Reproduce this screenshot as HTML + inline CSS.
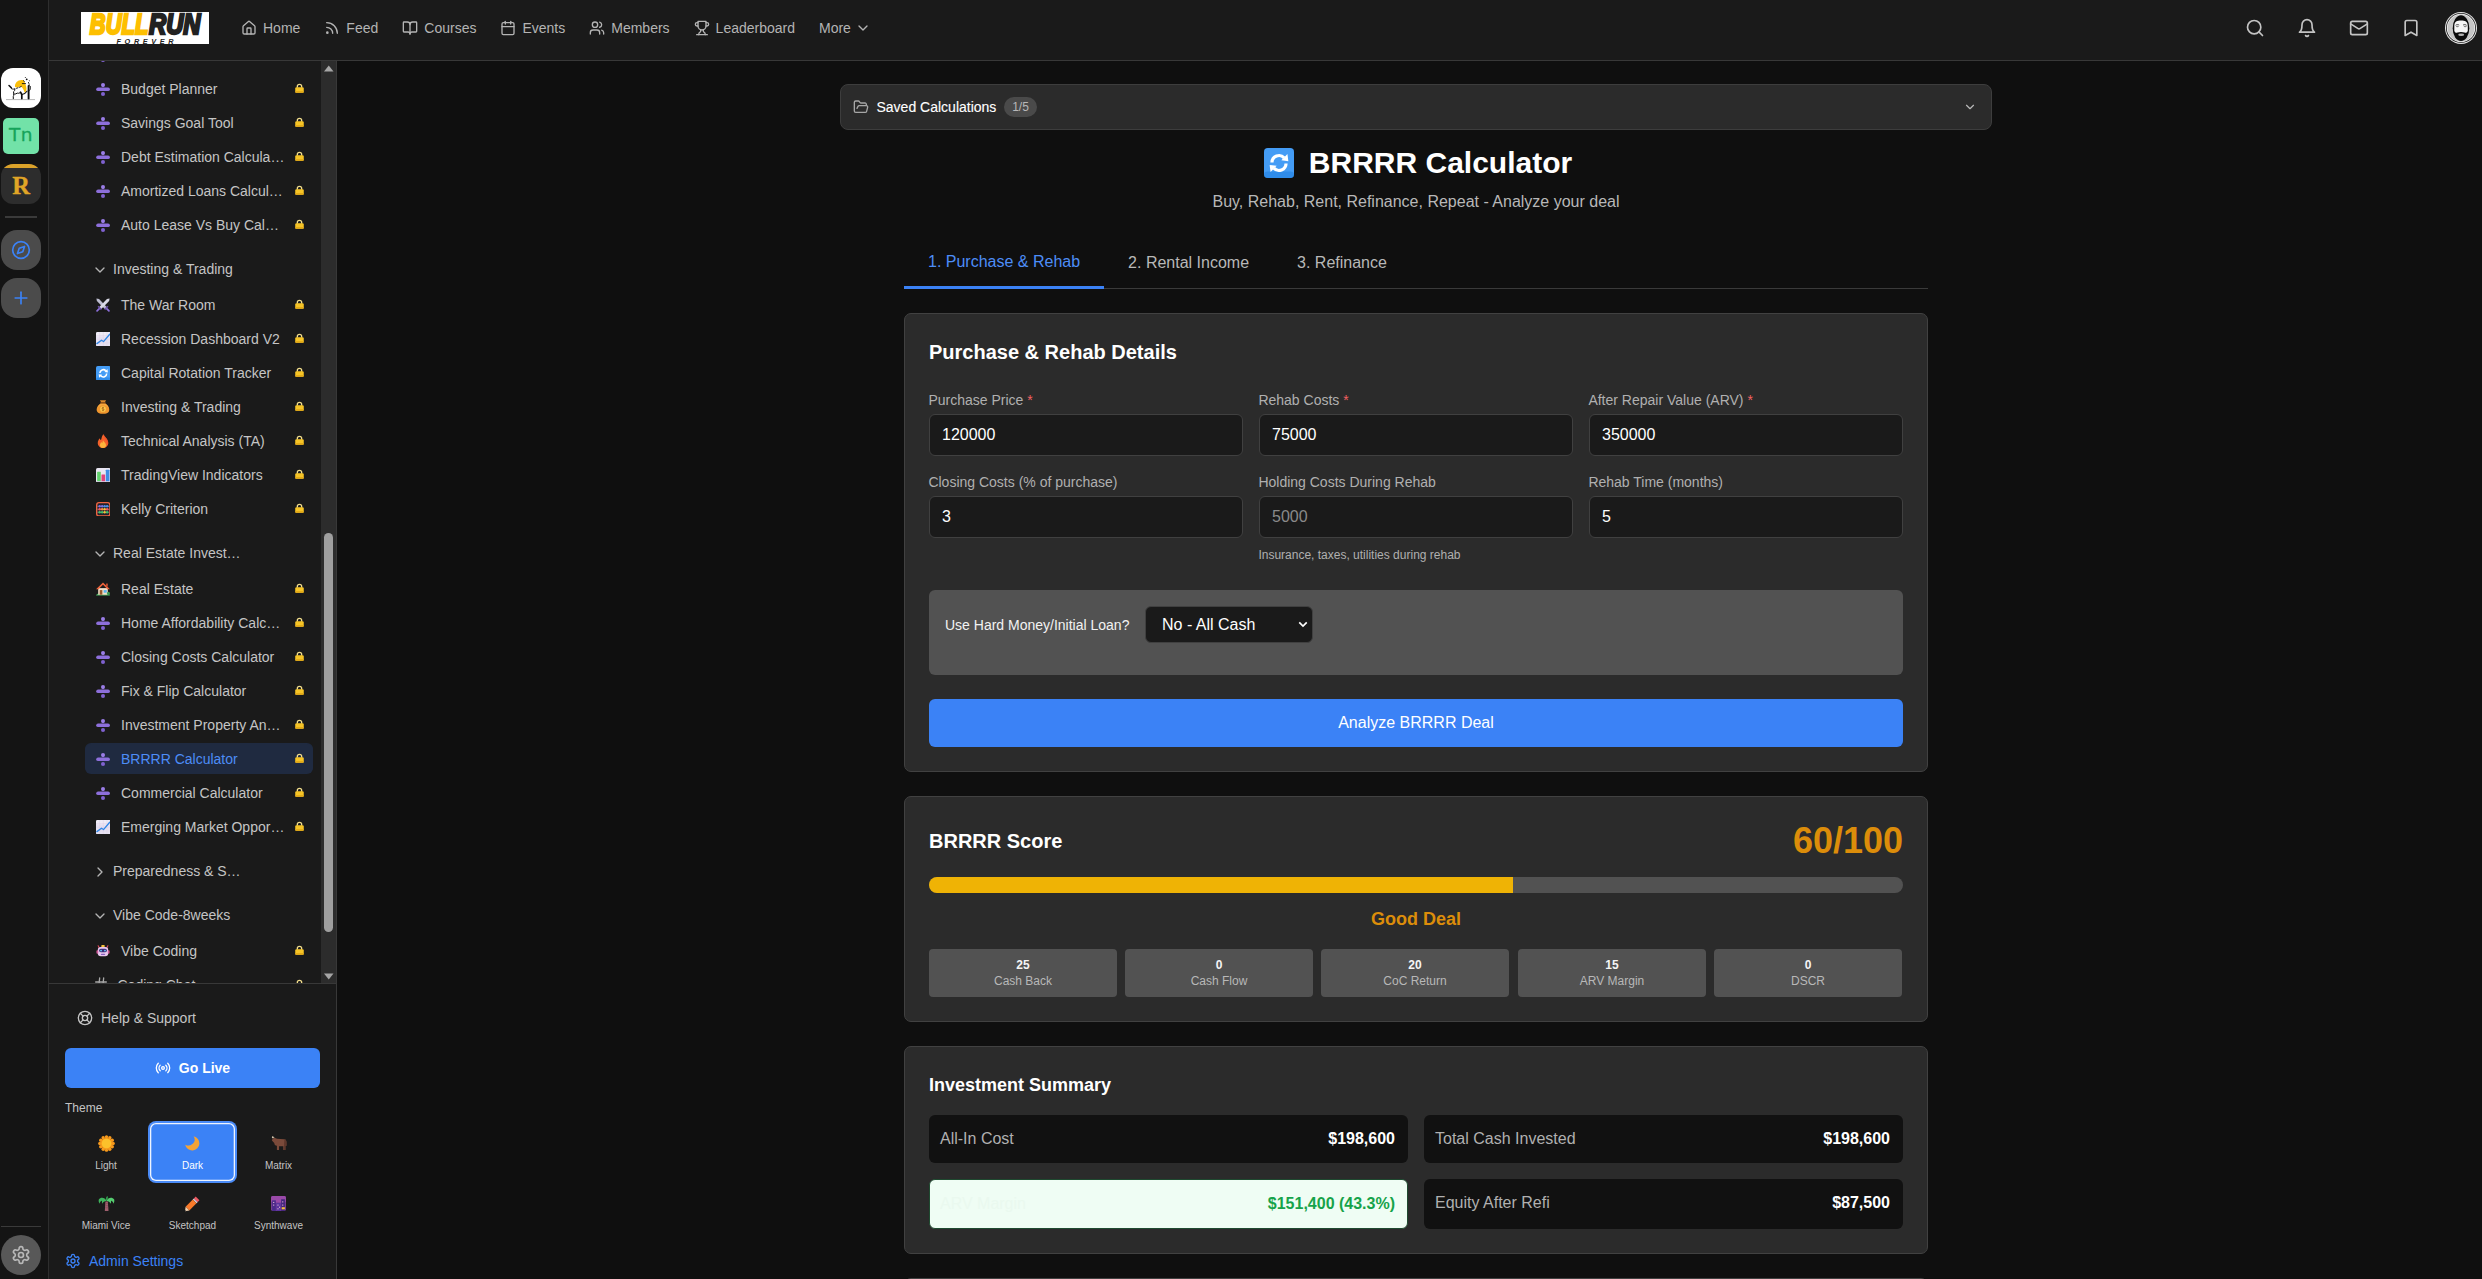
<!DOCTYPE html>
<html lang="en">
<head>
<meta charset="utf-8">
<title>BRRRR Calculator</title>
<style>
*{box-sizing:border-box;margin:0;padding:0}
html,body{width:2482px;height:1279px;overflow:hidden;background:#0f0f0f;font-family:"Liberation Sans",Arial,sans-serif;color:#e5e5e5}
svg{display:block}
.ic{fill:none;stroke:currentColor;stroke-width:2;stroke-linecap:round;stroke-linejoin:round}
/* ---------- left rail ---------- */
#rail{position:absolute;left:0;top:0;width:49px;height:1279px;background:#141414;border-right:1px solid #2e2e2e}
.rbtn{position:absolute;left:1px;width:40px;height:40px;border-radius:12px;overflow:hidden}
.rbtn svg{position:absolute;left:10px;top:10px}
/* ---------- top bar ---------- */
#top{position:absolute;left:49px;top:0;width:2433px;height:61px;background:#1a1a1a;border-bottom:1px solid #383838}
#logo{position:absolute;left:32px;top:12px;width:128px;height:32px;background:#fff;overflow:hidden}
#nav{position:absolute;left:180px;top:0;height:56px;display:flex;align-items:center;color:#b4b4b4;font-size:14px;white-space:nowrap}
.ni{display:flex;align-items:center;padding:0 12px;line-height:20px}
.ni svg{margin-right:6px}
.tic{position:absolute;top:18px;width:20px;height:20px;color:#c4c4c4}
#ava{position:absolute;left:2396px;top:12px;width:32px;height:32px}
/* ---------- sidebar ---------- */
#side{position:absolute;left:49px;top:61px;width:288px;height:1218px;background:#1a1a1a;border-right:1px solid #383838}
#scroll{position:absolute;left:0;top:0;width:287px;height:923px;overflow:hidden;border-bottom:1px solid #383838}
#sbar{position:absolute;left:272px;top:0;width:15px;height:922px;background:#2c2c2c}
#sbar i{position:absolute;left:3px;top:472px;width:9px;height:399px;border-radius:5px;background:#9f9f9f}
#sbar svg{position:absolute;left:3px;width:9.500px;height:7px}
.it{position:absolute;left:36px;width:228px;height:30px;border-radius:6px;font-size:14px;color:#c5c5c5;white-space:nowrap}
.it .tx{position:absolute;left:36px;top:6px;line-height:18px}
.it .em{position:absolute;left:11px;top:8px;width:14px;height:14px}
.it .em.sq{left:10.700px;top:7.700px;width:14.600px;height:14.600px}
.it .em.d16{left:10px;top:7px;width:16px;height:16px}
.it .lk{position:absolute;left:209.800px;top:9.100px;width:9px;height:10.300px}
.it.act{background:#1f2a40;color:#4d8df7;box-shadow:0 -1px 0 0 #1f2a40}
.hd{position:absolute;left:46px;font-size:14px;color:#c4c4c4;white-space:nowrap;line-height:18px;height:18px}
.hd svg{position:absolute;left:-3px;top:1.500px;color:#b4b4b4}
.hd span{position:absolute;left:18px;top:0}
#help{position:absolute;left:28px;top:949px;width:16px;height:16px;color:#c4c4c4}
#helpt{position:absolute;left:52px;top:948px;font-size:14px;line-height:18px;color:#c4c4c4}
#live{position:absolute;left:16px;top:987px;width:255px;height:40px;border-radius:6px;background:#3b82f6;color:#fff;font-weight:700;font-size:14px;display:flex;align-items:center;justify-content:center}
#live svg{margin-right:8px}
#thl{position:absolute;left:16px;top:1040px;font-size:12px;line-height:14px;color:#c4c4c4}
.th{position:absolute;width:85px;height:58px;border-radius:6px;color:#c4c4c4;font-size:10px;text-align:center}
.th .te{position:absolute;left:34px;top:11.500px;width:17px;height:17px}
.th span{position:absolute;left:0;right:0;top:37px;line-height:12px}
.th.sel{background:#3b82f6;color:#fff;box-shadow:inset 0 0 0 1.300px #eef4ff,0 0 0 2px #4a8bf7}
#adm{position:absolute;left:16px;top:1192px;width:16px;height:16px;color:#3b82f6}
#admt{position:absolute;left:40px;top:1191px;font-size:14px;line-height:18px;color:#3b82f6}
/* ---------- main ---------- */
#main{position:absolute;left:337px;top:61px;width:2145px;height:1218px;overflow:hidden}
#saved{position:absolute;left:503px;top:23px;width:1152px;height:46px;background:#2b2b2b;border:1px solid #3d3d3d;border-radius:8px}
#saved .f{position:absolute;left:12px;top:14px;color:#a6a6a6}
#saved .t{position:absolute;left:35.500px;top:13px;font-size:14px;line-height:18px;color:#fff;-webkit-text-stroke:.12px #fff}
#saved .b{position:absolute;left:163px;top:12px;width:33px;height:20px;border-radius:10px;background:#4a4a4a;color:#b8b8b8;font-size:12px;line-height:20px;text-align:center}
#saved .c{position:absolute;left:1122px;top:15px;color:#b8b8b8}
#ttl{position:absolute;left:567px;top:84px;width:1024px;padding-left:4px;height:36px;display:flex;justify-content:center;align-items:center;font-size:30px;font-weight:700;color:#fff;white-space:nowrap}
#ttl svg{width:30px;height:30px;margin-right:15px}
#sub{position:absolute;left:567px;top:131px;width:1024px;text-align:center;font-size:16px;line-height:20px;color:#b8b8b8}
#tabs{position:absolute;left:567px;top:176px;width:1024px;height:52px;border-bottom:1px solid #3a3a3a;display:flex;font-size:16px;color:#b8b8b8;white-space:nowrap}
#tabs div{padding:0 24px;line-height:52px;height:52px}
#tabs .a{color:#4d8df7;border-bottom:3px solid #3b82f6;line-height:49px}
.card{position:absolute;left:567px;width:1024px;background:#2b2b2b;border:1px solid #414141;border-radius:7px}
.card h2{position:absolute;left:24px;font-weight:700;color:#fff;white-space:nowrap}
.lbl{position:absolute;font-size:14px;color:#b0b0b0;line-height:18px;white-space:nowrap}
.lbl i{color:#f26161;font-style:normal}
.inp{position:absolute;width:314px;height:42px;background:#1a1a1a;border:1px solid #404040;border-radius:6px;font-size:16px;color:#fff;line-height:40px;padding-left:12px}
.inp.ph{color:#8a8a8a}
</style>
</head>
<body>
<div id="rail">
  <div class="rbtn" style="top:68px;background:#fff">
    <svg viewBox="0 0 40 40" width="40" height="40" style="left:0;top:0">
      <path d="M14 19c-.5-4 3-7.500 7.500-7 1.500.2 2 1.500 2.500 3 .8 2.500 2 4.500 1.300 7.500-.3 1.300-1 2-1.600 2.300-.8-3-2-5-4-6.500-1.800 1.200-3.800 1.500-5.700.7z" fill="#fbbf0a"/>
      <g fill="none" stroke="#0d0d0d" stroke-linecap="round" stroke-linejoin="round">
        <path d="M8 17.500l2.300 2.300" stroke-width="1.500"/>
        <path d="M10.300 20.600c1.200.8 2.500.6 3.700.3" stroke-width=".9"/>
        <path d="M15.500 20.300l1.500-.5M18.500 19.300l1.800-.9" stroke-width=".9"/>
        <path d="M13.700 21c.4 1.300-.3 2.200-1.200 2.800.3 1 .3 1.700 0 2.600.3.800.2 1.400-.2 2v2.300" stroke-width="1"/>
        <path d="M13 26.200c1.300-.2 2.500-.3 3.300-1.100.8.300 1.600.3 2.400-.2" stroke-width="1"/>
        <path d="M19.500 24.200l1.300 2.300v4.300" stroke-width="1.700"/>
        <path d="M21 26.500c1.700 0 3.700-1.500 5-3.300" stroke-width="1.100"/>
        <path d="M27.600 18v12.800" stroke-width="1.900"/>
        <path d="M29.300 18.500c.3 1.500.2 2.700-.6 3.800" stroke-width="1"/>
        <path d="M21.300 15.600h3.200" stroke-width=".9"/>
        <path d="M22.500 12.500l.9 1.200" stroke-width=".7"/>
        <path d="M27.500 14.500c.5 1 .8 2 .8 3.200" stroke-width=".8" stroke-dasharray="1.200 1"/>
      </g>
      <circle cx="25.700" cy="11.300" r=".9" fill="#0d0d0d"/><circle cx="24.300" cy="9.600" r=".5" fill="#0d0d0d"/><circle cx="28.300" cy="12.700" r=".5" fill="#0d0d0d"/><circle cx="27.400" cy="14.500" r=".45" fill="#0d0d0d"/>
      <path d="M5 31.600h29" stroke="#9a9a9a" stroke-width=".7"/>
    </svg>
  </div>
  <div class="rbtn" style="top:118px;left:3px;width:36px;height:36px;border-radius:5px;background:#72e2a8;color:#16a35a;font-family:'DejaVu Sans','Liberation Sans',sans-serif;font-size:18.500px;line-height:33px;text-align:center;letter-spacing:.6px;-webkit-text-stroke:.3px #16a35a">Tn</div>
  <div class="rbtn" style="top:164px;background:#2d2d2d;color:#e0a526;font-family:'Liberation Serif',serif;font-weight:700;font-size:24.500px;line-height:43px;-webkit-text-stroke:.3px #e0a526;text-align:center"><div style="position:absolute;left:0;top:0;width:40px;height:3.500px;background:#dba22a"></div>R</div>
  <div style="position:absolute;left:5px;top:216px;width:32px;height:2px;background:#3a3a3a"></div>
  <div class="rbtn" style="top:230px;border-radius:16px;background:#4b4b4b;color:#3b82f6"><svg class="ic" viewBox="0 0 24 24" width="20" height="20" ><circle cx="12" cy="12" r="10"/><polygon points="16.24 7.76 14.12 14.12 7.76 16.24 9.88 9.88 16.24 7.76"/></svg></div>
  <div class="rbtn" style="top:278px;border-radius:16px;background:#4b4b4b;color:#3b82f6"><svg class="ic" viewBox="0 0 24 24" width="20" height="20" ><path d="M5 12h14"/><path d="M12 5v14"/></svg></div>
  <div style="position:absolute;left:1px;top:1226px;width:40px;height:1px;background:#3a3a3a"></div>
  <div class="rbtn" style="top:1235px;border-radius:20px;background:#585858;color:#b8b8b8"><svg class="ic" viewBox="0 0 24 24" width="20" height="20" ><path d="M12.22 2h-.44a2 2 0 0 0-2 2v.18a2 2 0 0 1-1 1.73l-.43.25a2 2 0 0 1-2 0l-.15-.08a2 2 0 0 0-2.73.73l-.22.38a2 2 0 0 0 .73 2.73l.15.1a2 2 0 0 1 1 1.72v.51a2 2 0 0 1-1 1.74l-.15.09a2 2 0 0 0-.73 2.73l.22.38a2 2 0 0 0 2.73.73l.15-.08a2 2 0 0 1 2 0l.43.25a2 2 0 0 1 1 1.73V20a2 2 0 0 0 2 2h.44a2 2 0 0 0 2-2v-.18a2 2 0 0 1 1-1.73l.43-.25a2 2 0 0 1 2 0l.15.08a2 2 0 0 0 2.73-.73l.22-.39a2 2 0 0 0-.73-2.73l-.15-.08a2 2 0 0 1-1-1.74v-.5a2 2 0 0 1 1-1.74l.15-.09a2 2 0 0 0 .73-2.73l-.22-.38a2 2 0 0 0-2.73-.73l-.15.08a2 2 0 0 1-2 0l-.43-.25a2 2 0 0 1-1-1.73V4a2 2 0 0 0-2-2z"/><circle cx="12" cy="12" r="3"/></svg></div>
</div>

<div id="top">
  <div id="logo">
    <svg viewBox="0 0 128 32" width="128" height="32">
      <g font-family="Liberation Sans, sans-serif" font-weight="700" font-style="italic" stroke-linejoin="miter">
      <text x="8.800" y="22.200" font-size="29.500" fill="#fdbf00" stroke="#fdbf00" stroke-width="2.500" textLength="58.500" lengthAdjust="spacingAndGlyphs">BULL</text>
      <text x="68" y="22.200" font-size="29.500" fill="#222" stroke="#222" stroke-width="2.500" textLength="51.500" lengthAdjust="spacingAndGlyphs">RUN</text>
      <text x="35.500" y="31.800" font-size="7.300" fill="#222" textLength="57" lengthAdjust="spacing">FOREVER</text>
      </g>
    </svg>
  </div>
  <div id="nav"><div class="ni"><svg class="ic" viewBox="0 0 24 24" width="16" height="16" ><path d="M15 21v-8a1 1 0 0 0-1-1h-4a1 1 0 0 0-1 1v8"/><path d="M3 10a2 2 0 0 1 .709-1.528l7-5.999a2 2 0 0 1 2.582 0l7 5.999A2 2 0 0 1 21 10v9a2 2 0 0 1-2 2H5a2 2 0 0 1-2-2z"/></svg><span>Home</span></div><div class="ni"><svg class="ic" viewBox="0 0 24 24" width="16" height="16" ><path d="M4 11a9 9 0 0 1 9 9"/><path d="M4 4a16 16 0 0 1 16 16"/><circle cx="5" cy="19" r="1"/></svg><span>Feed</span></div><div class="ni"><svg class="ic" viewBox="0 0 24 24" width="16" height="16" ><path d="M12 7v14"/><path d="M3 18a1 1 0 0 1-1-1V4a1 1 0 0 1 1-1h5a4 4 0 0 1 4 4 4 4 0 0 1 4-4h5a1 1 0 0 1 1 1v13a1 1 0 0 1-1 1h-6a3 3 0 0 0-3 3 3 3 0 0 0-3-3z"/></svg><span>Courses</span></div><div class="ni"><svg class="ic" viewBox="0 0 24 24" width="16" height="16" ><path d="M8 2v4"/><path d="M16 2v4"/><rect width="18" height="18" x="3" y="4" rx="2"/><path d="M3 10h18"/></svg><span>Events</span></div><div class="ni"><svg class="ic" viewBox="0 0 24 24" width="16" height="16" ><path d="M16 21v-2a4 4 0 0 0-4-4H6a4 4 0 0 0-4 4v2"/><circle cx="9" cy="7" r="4"/><path d="M22 21v-2a4 4 0 0 0-3-3.87"/><path d="M16 3.13a4 4 0 0 1 0 7.75"/></svg><span>Members</span></div><div class="ni"><svg class="ic" viewBox="0 0 24 24" width="16" height="16" ><path d="M6 9H4.5a2.5 2.5 0 0 1 0-5H6"/><path d="M18 9h1.5a2.5 2.5 0 0 0 0-5H18"/><path d="M4 22h16"/><path d="M10 14.66V17c0 .55-.47.98-.97 1.21C7.85 18.75 7 20.24 7 22"/><path d="M14 14.66V17c0 .55.47.98.97 1.21C16.15 18.75 17 20.24 17 22"/><path d="M18 2H6v7a6 6 0 0 0 12 0V2Z"/></svg><span>Leaderboard</span></div><div class="ni"><span>More</span><svg class="ic" viewBox="0 0 24 24" width="16" height="16" style="margin:0 0 0 4px"><path d="m6 9 6 6 6-6"/></svg></div></div>
  <div class="tic" style="left:2196px"><svg class="ic" viewBox="0 0 24 24" width="20" height="20" ><circle cx="11" cy="11" r="8"/><path d="m21 21-4.3-4.3"/></svg></div>
  <div class="tic" style="left:2248px"><svg class="ic" viewBox="0 0 24 24" width="20" height="20" ><path d="M6 8a6 6 0 0 1 12 0c0 7 3 9 3 9H3s3-2 3-9"/><path d="M10.3 21a1.94 1.94 0 0 0 3.4 0"/></svg></div>
  <div class="tic" style="left:2300px"><svg class="ic" viewBox="0 0 24 24" width="20" height="20" ><rect width="20" height="16" x="2" y="4" rx="2"/><path d="m22 7-8.97 5.7a1.94 1.94 0 0 1-2.06 0L2 7"/></svg></div>
  <div class="tic" style="left:2352px"><svg class="ic" viewBox="0 0 24 24" width="20" height="20" ><path d="m19 21-7-4-7 4V5a2 2 0 0 1 2-2h10a2 2 0 0 1 2 2v16z"/></svg></div>
  <svg id="ava" viewBox="0 0 32 32">
    <circle cx="16" cy="16" r="16" fill="#e4e4e4"/><circle cx="16" cy="16" r="15" fill="#1c1c1c"/><circle cx="16" cy="16" r="14.200" fill="#f0f0f0"/><circle cx="16" cy="16" r="13.400" fill="#c6c6c6"/>
    <ellipse cx="16" cy="16.200" rx="8.300" ry="12.900" fill="#0b0b0b"/>
    <path d="M9.300 14.500C9.300 9.500 12 8.600 16 8.600s6.800.9 6.800 5.900v4.200c-.8 2.400-2.300 2.100-3.300 1.700-1.700-.7-5.300-.7-7 0-1 .4-2.500.7-3.200-1.700z" fill="#f6f6f6"/>
    <ellipse cx="16.200" cy="22.700" rx="3" ry="1.300" fill="#b5b5b5"/>
    <path d="M10.600 13.300c1-.9 2.600-.9 3.600-.2M18 13.100c1-.7 2.600-.7 3.600.2" stroke="#3a3a3a" stroke-width=".9" fill="none"/>
    <ellipse cx="12.400" cy="14.500" rx="1.500" ry=".8" fill="#8a8a8a"/><ellipse cx="20.200" cy="14.500" rx="1.500" ry=".8" fill="#8a8a8a"/>
  </svg>
</div>

<div id="side">
  <div id="scroll">
<div class="it" style="top:-21px"><svg class="em d16" viewBox="0 0 32 32"><rect x="2.400" y="12.800" width="27.400" height="7.400" rx="3.700" fill="#8d6fdb"/><circle cx="16" cy="8.200" r="4.100" fill="#9a7de6"/><circle cx="16" cy="26.100" r="4.100" fill="#7f61cf"/></svg><span class="tx">Net Worth Tracker</span><svg class="lk" viewBox="0 0 20 22"><path d="M5.200 10V7.300a4.800 4.800 0 0 1 9.600 0V10" fill="none" stroke="#f0dc8c" stroke-width="3"/><rect x="0.500" y="9" width="19" height="12.500" rx="3" fill="#f6c426"/><rect x="0.500" y="17.500" width="19" height="4" rx="2" fill="#e4ab18"/></svg></div>
<div class="it" style="top:13px"><svg class="em d16" viewBox="0 0 32 32"><rect x="2.400" y="12.800" width="27.400" height="7.400" rx="3.700" fill="#8d6fdb"/><circle cx="16" cy="8.200" r="4.100" fill="#9a7de6"/><circle cx="16" cy="26.100" r="4.100" fill="#7f61cf"/></svg><span class="tx">Budget Planner</span><svg class="lk" viewBox="0 0 20 22"><path d="M5.200 10V7.300a4.800 4.800 0 0 1 9.600 0V10" fill="none" stroke="#f0dc8c" stroke-width="3"/><rect x="0.500" y="9" width="19" height="12.500" rx="3" fill="#f6c426"/><rect x="0.500" y="17.500" width="19" height="4" rx="2" fill="#e4ab18"/></svg></div>
<div class="it" style="top:47px"><svg class="em d16" viewBox="0 0 32 32"><rect x="2.400" y="12.800" width="27.400" height="7.400" rx="3.700" fill="#8d6fdb"/><circle cx="16" cy="8.200" r="4.100" fill="#9a7de6"/><circle cx="16" cy="26.100" r="4.100" fill="#7f61cf"/></svg><span class="tx">Savings Goal Tool</span><svg class="lk" viewBox="0 0 20 22"><path d="M5.200 10V7.300a4.800 4.800 0 0 1 9.600 0V10" fill="none" stroke="#f0dc8c" stroke-width="3"/><rect x="0.500" y="9" width="19" height="12.500" rx="3" fill="#f6c426"/><rect x="0.500" y="17.500" width="19" height="4" rx="2" fill="#e4ab18"/></svg></div>
<div class="it" style="top:81px"><svg class="em d16" viewBox="0 0 32 32"><rect x="2.400" y="12.800" width="27.400" height="7.400" rx="3.700" fill="#8d6fdb"/><circle cx="16" cy="8.200" r="4.100" fill="#9a7de6"/><circle cx="16" cy="26.100" r="4.100" fill="#7f61cf"/></svg><span class="tx">Debt Estimation Calcula…</span><svg class="lk" viewBox="0 0 20 22"><path d="M5.200 10V7.300a4.800 4.800 0 0 1 9.600 0V10" fill="none" stroke="#f0dc8c" stroke-width="3"/><rect x="0.500" y="9" width="19" height="12.500" rx="3" fill="#f6c426"/><rect x="0.500" y="17.500" width="19" height="4" rx="2" fill="#e4ab18"/></svg></div>
<div class="it" style="top:115px"><svg class="em d16" viewBox="0 0 32 32"><rect x="2.400" y="12.800" width="27.400" height="7.400" rx="3.700" fill="#8d6fdb"/><circle cx="16" cy="8.200" r="4.100" fill="#9a7de6"/><circle cx="16" cy="26.100" r="4.100" fill="#7f61cf"/></svg><span class="tx">Amortized Loans Calcul…</span><svg class="lk" viewBox="0 0 20 22"><path d="M5.200 10V7.300a4.800 4.800 0 0 1 9.600 0V10" fill="none" stroke="#f0dc8c" stroke-width="3"/><rect x="0.500" y="9" width="19" height="12.500" rx="3" fill="#f6c426"/><rect x="0.500" y="17.500" width="19" height="4" rx="2" fill="#e4ab18"/></svg></div>
<div class="it" style="top:149px"><svg class="em d16" viewBox="0 0 32 32"><rect x="2.400" y="12.800" width="27.400" height="7.400" rx="3.700" fill="#8d6fdb"/><circle cx="16" cy="8.200" r="4.100" fill="#9a7de6"/><circle cx="16" cy="26.100" r="4.100" fill="#7f61cf"/></svg><span class="tx">Auto Lease Vs Buy Cal…</span><svg class="lk" viewBox="0 0 20 22"><path d="M5.200 10V7.300a4.800 4.800 0 0 1 9.600 0V10" fill="none" stroke="#f0dc8c" stroke-width="3"/><rect x="0.500" y="9" width="19" height="12.500" rx="3" fill="#f6c426"/><rect x="0.500" y="17.500" width="19" height="4" rx="2" fill="#e4ab18"/></svg></div>
<div class="hd" style="top:199px"><svg class="ic" viewBox="0 0 24 24" width="16" height="16" ><path d="m6 9 6 6 6-6"/></svg><span>Investing &amp; Trading</span></div>
<div class="it" style="top:229px"><svg class="em" viewBox="0 0 32 32"><path d="M1 1l6 1 18 19-4.500 4.500L2 7z" fill="#bdbdd0"/><path d="M31 1l-6 1L7 21l4.500 4.500L30 7z" fill="#d9d9e6"/><path d="M18.500 25l7.500-7.500 2.500 2.500-7.500 7.500z" fill="#6f55ad"/><path d="M13.500 25L6 17.500 3.500 20l7.500 7.500z" fill="#6f55ad"/><path d="M25 25l4.500 4.500" stroke="#8d6fdb" stroke-width="4" stroke-linecap="round"/><path d="M7 25l-4.500 4.500" stroke="#8d6fdb" stroke-width="4" stroke-linecap="round"/></svg><span class="tx">The War Room</span><svg class="lk" viewBox="0 0 20 22"><path d="M5.200 10V7.300a4.800 4.800 0 0 1 9.600 0V10" fill="none" stroke="#f0dc8c" stroke-width="3"/><rect x="0.500" y="9" width="19" height="12.500" rx="3" fill="#f6c426"/><rect x="0.500" y="17.500" width="19" height="4" rx="2" fill="#e4ab18"/></svg></div>
<div class="it" style="top:263px"><svg class="em sq" viewBox="0 0 32 32"><rect x="0" y="0" width="32" height="32" rx="3.500" fill="#e6e1f1"/><rect x="0" y="0" width="32" height="10" rx="3.500" fill="#efecf6"/><path d="M0 8h32M0 16h32M0 24h32M8 0v32M16 0v32M24 0v32" stroke="#dccfe6" stroke-width="1"/><path d="M2 25.500l10-7.500 4.500 3L30 5" fill="none" stroke="#2f86e6" stroke-width="2.800" stroke-linecap="round" stroke-linejoin="round"/></svg><span class="tx">Recession Dashboard V2</span><svg class="lk" viewBox="0 0 20 22"><path d="M5.200 10V7.300a4.800 4.800 0 0 1 9.600 0V10" fill="none" stroke="#f0dc8c" stroke-width="3"/><rect x="0.500" y="9" width="19" height="12.500" rx="3" fill="#f6c426"/><rect x="0.500" y="17.500" width="19" height="4" rx="2" fill="#e4ab18"/></svg></div>
<div class="it" style="top:297px"><svg class="em sq" viewBox="0 0 32 32"><rect x="0" y="0" width="32" height="32" rx="4" fill="#449cf5"/><rect x="0" y="25" width="32" height="7" rx="4" fill="#1f7fe0" opacity=".55"/><path d="M8.500 15.500a7.500 7.500 0 0 1 13-5" fill="none" stroke="#fff" stroke-width="3.400"/><path d="M18.500 13l7.500 1-1-7.500z" fill="#fff"/><path d="M23.500 16.500a7.500 7.500 0 0 1-13 5" fill="none" stroke="#fff" stroke-width="3.400"/><path d="M13.500 19L6 18l1 7.500z" fill="#fff"/></svg><span class="tx">Capital Rotation Tracker</span><svg class="lk" viewBox="0 0 20 22"><path d="M5.200 10V7.300a4.800 4.800 0 0 1 9.600 0V10" fill="none" stroke="#f0dc8c" stroke-width="3"/><rect x="0.500" y="9" width="19" height="12.500" rx="3" fill="#f6c426"/><rect x="0.500" y="17.500" width="19" height="4" rx="2" fill="#e4ab18"/></svg></div>
<div class="it" style="top:331px"><svg class="em" viewBox="0 0 32 32"><path d="M11.500 4.500L9 .8h14l-2.500 3.700z" fill="#d9892c"/><path d="M10.500 5h11l.8 3.500h-12.600z" fill="#b5651a"/><path d="M10 8.500C3 13 0 20.500 2.500 26c1.700 4 6 5.500 13.500 5.500S27.800 30 29.500 26C32 20.500 29 13 22 8.500z" fill="#ef962e"/><path d="M10 8.500C6 11 3.500 15 2.500 19c3-4 8-7 13.500-7s10.500 3 13.500 7c-1-4-3.500-8-7.500-10.500z" fill="#f9ae45" opacity=".7"/><circle cx="16" cy="20.500" r="6.500" fill="#f9cc4e"/><path d="M16 15.500v10M18.500 18c-1.300-1.300-5-1.100-5 .9 0 2.200 5.200 1.100 5.200 3.400 0 2-3.900 2.200-5.400.7" fill="none" stroke="#a65b16" stroke-width="1.600"/></svg><span class="tx">Investing &amp; Trading</span><svg class="lk" viewBox="0 0 20 22"><path d="M5.200 10V7.300a4.800 4.800 0 0 1 9.600 0V10" fill="none" stroke="#f0dc8c" stroke-width="3"/><rect x="0.500" y="9" width="19" height="12.500" rx="3" fill="#f6c426"/><rect x="0.500" y="17.500" width="19" height="4" rx="2" fill="#e4ab18"/></svg></div>
<div class="it" style="top:365px"><svg class="em" viewBox="0 0 32 32"><path d="M17 0c1 6 11 10 11 20.500C28 27 22.500 32 16 32S4 27 4 20.500c0-5 2.500-7.500 4-11 1 2.500 2 3.500 3.500 4C13 9 13.500 4 17 0z" fill="#f4622a"/><path d="M17 0c1 6 11 10 11 20.500 0 2-.5 4-1.500 5.500C27 17 19 12 17 0z" fill="#e8452a" opacity=".55"/><path d="M16 14c1.500 4 7 6 7 11.500C23 29 20 32 16 32s-7-3-7-6.500c0-3 2-4.500 3-7 1 1.500 2 2 2.500 2 .5-2.500.5-4 1.500-6.500z" fill="#fcb43b"/></svg><span class="tx">Technical Analysis (TA)</span><svg class="lk" viewBox="0 0 20 22"><path d="M5.200 10V7.300a4.800 4.800 0 0 1 9.600 0V10" fill="none" stroke="#f0dc8c" stroke-width="3"/><rect x="0.500" y="9" width="19" height="12.500" rx="3" fill="#f6c426"/><rect x="0.500" y="17.500" width="19" height="4" rx="2" fill="#e4ab18"/></svg></div>
<div class="it" style="top:399px"><svg class="em sq" viewBox="0 0 32 32"><rect x="0" y="0" width="32" height="32" rx="3.500" fill="#eae6f2"/><rect x="2.500" y="8" width="8" height="22" rx="1" fill="#62d26c"/><rect x="12" y="14" width="8" height="16" rx="1" fill="#e0457b"/><rect x="21.500" y="4" width="8" height="26" rx="1" fill="#3d8ee6"/><rect x="0" y="29" width="32" height="3" rx="1.500" fill="#d3cbe3"/></svg><span class="tx">TradingView Indicators</span><svg class="lk" viewBox="0 0 20 22"><path d="M5.200 10V7.300a4.800 4.800 0 0 1 9.600 0V10" fill="none" stroke="#f0dc8c" stroke-width="3"/><rect x="0.500" y="9" width="19" height="12.500" rx="3" fill="#f6c426"/><rect x="0.500" y="17.500" width="19" height="4" rx="2" fill="#e4ab18"/></svg></div>
<div class="it" style="top:433px"><svg class="em sq" viewBox="0 0 32 32"><rect x="1.500" y="1.500" width="29" height="29" rx="5" fill="#22202c" stroke="#ee6440" stroke-width="3"/><path d="M3 9.500h26M3 16h26M3 22.500h26" stroke="#b9b9c4" stroke-width="1"/><g><circle cx="8" cy="9.500" r="2.700" fill="#7a6fe0"/><circle cx="13.500" cy="9.500" r="2.700" fill="#7a6fe0"/><circle cx="19" cy="9.500" r="2.700" fill="#4a8fe8"/><circle cx="24.500" cy="9.500" r="2.700" fill="#4a8fe8"/><circle cx="8" cy="16" r="2.700" fill="#ef5a63"/><circle cx="13.500" cy="16" r="2.700" fill="#f6913a"/><circle cx="19" cy="16" r="2.700" fill="#f6c13a"/><circle cx="24.500" cy="16" r="2.700" fill="#ef5a63"/><circle cx="8" cy="22.500" r="2.700" fill="#3fbf6b"/><circle cx="13.500" cy="22.500" r="2.700" fill="#3fbf6b"/><circle cx="19" cy="22.500" r="2.700" fill="#f6c13a"/><circle cx="24.500" cy="22.500" r="2.700" fill="#3fbf6b"/></g></svg><span class="tx">Kelly Criterion</span><svg class="lk" viewBox="0 0 20 22"><path d="M5.200 10V7.300a4.800 4.800 0 0 1 9.600 0V10" fill="none" stroke="#f0dc8c" stroke-width="3"/><rect x="0.500" y="9" width="19" height="12.500" rx="3" fill="#f6c426"/><rect x="0.500" y="17.500" width="19" height="4" rx="2" fill="#e4ab18"/></svg></div>
<div class="hd" style="top:483px"><svg class="ic" viewBox="0 0 24 24" width="16" height="16" ><path d="m6 9 6 6 6-6"/></svg><span>Real Estate Invest…</span></div>
<div class="it" style="top:513px"><svg class="em" viewBox="0 0 32 32"><path d="M0 31c1-3 4-4.500 7-4h18c3-.500 6 1 7 4z" fill="#4cb765"/><rect x="5" y="14" width="22" height="15" fill="#f3dfc8"/><path d="M16 1L0 16.500h5.500L16 6.500l10.500 10H32z" fill="#f0643c"/><rect x="23" y="3.500" width="4" height="7" fill="#c94a2c"/><rect x="8.500" y="18.500" width="6" height="10.500" fill="#9a5a2c"/><rect x="17.500" y="18.500" width="7" height="6" fill="#59b5ef"/><circle cx="28.500" cy="26" r="3.500" fill="#3a9a52"/></svg><span class="tx">Real Estate</span><svg class="lk" viewBox="0 0 20 22"><path d="M5.200 10V7.300a4.800 4.800 0 0 1 9.600 0V10" fill="none" stroke="#f0dc8c" stroke-width="3"/><rect x="0.500" y="9" width="19" height="12.500" rx="3" fill="#f6c426"/><rect x="0.500" y="17.500" width="19" height="4" rx="2" fill="#e4ab18"/></svg></div>
<div class="it" style="top:547px"><svg class="em d16" viewBox="0 0 32 32"><rect x="2.400" y="12.800" width="27.400" height="7.400" rx="3.700" fill="#8d6fdb"/><circle cx="16" cy="8.200" r="4.100" fill="#9a7de6"/><circle cx="16" cy="26.100" r="4.100" fill="#7f61cf"/></svg><span class="tx">Home Affordability Calc…</span><svg class="lk" viewBox="0 0 20 22"><path d="M5.200 10V7.300a4.800 4.800 0 0 1 9.600 0V10" fill="none" stroke="#f0dc8c" stroke-width="3"/><rect x="0.500" y="9" width="19" height="12.500" rx="3" fill="#f6c426"/><rect x="0.500" y="17.500" width="19" height="4" rx="2" fill="#e4ab18"/></svg></div>
<div class="it" style="top:581px"><svg class="em d16" viewBox="0 0 32 32"><rect x="2.400" y="12.800" width="27.400" height="7.400" rx="3.700" fill="#8d6fdb"/><circle cx="16" cy="8.200" r="4.100" fill="#9a7de6"/><circle cx="16" cy="26.100" r="4.100" fill="#7f61cf"/></svg><span class="tx">Closing Costs Calculator</span><svg class="lk" viewBox="0 0 20 22"><path d="M5.200 10V7.300a4.800 4.800 0 0 1 9.600 0V10" fill="none" stroke="#f0dc8c" stroke-width="3"/><rect x="0.500" y="9" width="19" height="12.500" rx="3" fill="#f6c426"/><rect x="0.500" y="17.500" width="19" height="4" rx="2" fill="#e4ab18"/></svg></div>
<div class="it" style="top:615px"><svg class="em d16" viewBox="0 0 32 32"><rect x="2.400" y="12.800" width="27.400" height="7.400" rx="3.700" fill="#8d6fdb"/><circle cx="16" cy="8.200" r="4.100" fill="#9a7de6"/><circle cx="16" cy="26.100" r="4.100" fill="#7f61cf"/></svg><span class="tx">Fix &amp; Flip Calculator</span><svg class="lk" viewBox="0 0 20 22"><path d="M5.200 10V7.300a4.800 4.800 0 0 1 9.600 0V10" fill="none" stroke="#f0dc8c" stroke-width="3"/><rect x="0.500" y="9" width="19" height="12.500" rx="3" fill="#f6c426"/><rect x="0.500" y="17.500" width="19" height="4" rx="2" fill="#e4ab18"/></svg></div>
<div class="it" style="top:649px"><svg class="em d16" viewBox="0 0 32 32"><rect x="2.400" y="12.800" width="27.400" height="7.400" rx="3.700" fill="#8d6fdb"/><circle cx="16" cy="8.200" r="4.100" fill="#9a7de6"/><circle cx="16" cy="26.100" r="4.100" fill="#7f61cf"/></svg><span class="tx">Investment Property An…</span><svg class="lk" viewBox="0 0 20 22"><path d="M5.200 10V7.300a4.800 4.800 0 0 1 9.600 0V10" fill="none" stroke="#f0dc8c" stroke-width="3"/><rect x="0.500" y="9" width="19" height="12.500" rx="3" fill="#f6c426"/><rect x="0.500" y="17.500" width="19" height="4" rx="2" fill="#e4ab18"/></svg></div>
<div class="it act" style="top:683px"><svg class="em d16" viewBox="0 0 32 32"><rect x="2.400" y="12.800" width="27.400" height="7.400" rx="3.700" fill="#8d6fdb"/><circle cx="16" cy="8.200" r="4.100" fill="#9a7de6"/><circle cx="16" cy="26.100" r="4.100" fill="#7f61cf"/></svg><span class="tx">BRRRR Calculator</span><svg class="lk" viewBox="0 0 20 22"><path d="M5.200 10V7.300a4.800 4.800 0 0 1 9.600 0V10" fill="none" stroke="#f0dc8c" stroke-width="3"/><rect x="0.500" y="9" width="19" height="12.500" rx="3" fill="#f6c426"/><rect x="0.500" y="17.500" width="19" height="4" rx="2" fill="#e4ab18"/></svg></div>
<div class="it" style="top:717px"><svg class="em d16" viewBox="0 0 32 32"><rect x="2.400" y="12.800" width="27.400" height="7.400" rx="3.700" fill="#8d6fdb"/><circle cx="16" cy="8.200" r="4.100" fill="#9a7de6"/><circle cx="16" cy="26.100" r="4.100" fill="#7f61cf"/></svg><span class="tx">Commercial Calculator</span><svg class="lk" viewBox="0 0 20 22"><path d="M5.200 10V7.300a4.800 4.800 0 0 1 9.600 0V10" fill="none" stroke="#f0dc8c" stroke-width="3"/><rect x="0.500" y="9" width="19" height="12.500" rx="3" fill="#f6c426"/><rect x="0.500" y="17.500" width="19" height="4" rx="2" fill="#e4ab18"/></svg></div>
<div class="it" style="top:751px"><svg class="em sq" viewBox="0 0 32 32"><rect x="0" y="0" width="32" height="32" rx="3.500" fill="#e6e1f1"/><rect x="0" y="0" width="32" height="10" rx="3.500" fill="#efecf6"/><path d="M0 8h32M0 16h32M0 24h32M8 0v32M16 0v32M24 0v32" stroke="#dccfe6" stroke-width="1"/><path d="M2 25.500l10-7.500 4.500 3L30 5" fill="none" stroke="#2f86e6" stroke-width="2.800" stroke-linecap="round" stroke-linejoin="round"/></svg><span class="tx">Emerging Market Oppor…</span><svg class="lk" viewBox="0 0 20 22"><path d="M5.200 10V7.300a4.800 4.800 0 0 1 9.600 0V10" fill="none" stroke="#f0dc8c" stroke-width="3"/><rect x="0.500" y="9" width="19" height="12.500" rx="3" fill="#f6c426"/><rect x="0.500" y="17.500" width="19" height="4" rx="2" fill="#e4ab18"/></svg></div>
<div class="hd" style="top:801px"><svg class="ic" viewBox="0 0 24 24" width="16" height="16" ><path d="m9 18 6-6-6-6"/></svg><span>Preparedness &amp; S…</span></div>
<div class="hd" style="top:845px"><svg class="ic" viewBox="0 0 24 24" width="16" height="16" ><path d="m6 9 6 6 6-6"/></svg><span>Vibe Code-8weeks</span></div>
<div class="it" style="top:875px"><svg class="em" viewBox="0 0 32 32"><path d="M5 4l3 6M27 4l-3 6" stroke="#e24a5a" stroke-width="2.500" stroke-linecap="round"/><rect x="12" y="2" width="8" height="5" rx="2" fill="#f6c13a"/><rect x="4" y="7" width="24" height="21" rx="7" fill="#e9c8ee"/><rect x="7" y="11" width="18" height="8" rx="4" fill="#3a2a78"/><circle cx="11.500" cy="15" r="2" fill="#6fd0ff"/><circle cx="20.500" cy="15" r="2" fill="#6fd0ff"/><rect x="11" y="22" width="10" height="3" rx="1.500" fill="#8a5fbf"/><rect x="1" y="14" width="4" height="8" rx="2" fill="#d35a9a"/><rect x="27" y="14" width="4" height="8" rx="2" fill="#d35a9a"/></svg><span class="tx">Vibe Coding</span><svg class="lk" viewBox="0 0 20 22"><path d="M5.200 10V7.300a4.800 4.800 0 0 1 9.600 0V10" fill="none" stroke="#f0dc8c" stroke-width="3"/><rect x="0.500" y="9" width="19" height="12.500" rx="3" fill="#f6c426"/><rect x="0.500" y="17.500" width="19" height="4" rx="2" fill="#e4ab18"/></svg></div>
<div class="it" style="top:909px"><svg class="em ic" viewBox="0 0 24 24" style="color:#a8a8a8;left:8px;top:6px;width:16px;height:16px"><path d="M4 9h16"/><path d="M4 15h16"/><path d="M10 3 8 21"/><path d="M16 3l-2 18"/></svg><span class="tx" style="left:32.500px">Coding Chat</span><svg class="lk" viewBox="0 0 20 22"><path d="M5.200 10V7.300a4.800 4.800 0 0 1 9.600 0V10" fill="none" stroke="#f0dc8c" stroke-width="3"/><rect x="0.500" y="9" width="19" height="12.500" rx="3" fill="#f6c426"/><rect x="0.500" y="17.500" width="19" height="4" rx="2" fill="#e4ab18"/></svg></div>
    <div id="sbar"><svg viewBox="0 0 11 7" style="top:4px"><path d="M0 7L5.500 0 11 7z" fill="#a6a6a6"/></svg><i></i><svg viewBox="0 0 11 7" style="top:911.500px"><path d="M0 0L5.500 7 11 0z" fill="#a6a6a6"/></svg></div>
  </div>
  <div id="help"><svg class="ic" viewBox="0 0 24 24" width="16" height="16" ><circle cx="12" cy="12" r="10"/><path d="m4.93 4.93 4.24 4.24"/><path d="m14.83 9.17 4.24-4.24"/><path d="m14.83 14.83 4.24 4.24"/><path d="m9.17 14.83-4.24 4.24"/><circle cx="12" cy="12" r="4"/></svg></div><div id="helpt">Help &amp; Support</div>
  <div id="live"><svg class="ic" viewBox="0 0 24 24" width="16" height="16" ><path d="M4.9 19.1C1 15.2 1 8.8 4.9 4.9"/><path d="M7.8 16.2c-2.3-2.3-2.3-6.1 0-8.5"/><circle cx="12" cy="12" r="2"/><path d="M16.2 7.8c2.3 2.3 2.3 6.1 0 8.5"/><path d="M19.1 4.9C23 8.8 23 15.1 19.1 19"/></svg><span>Go Live</span></div>
  <div id="thl">Theme</div>
  <div class="th" style="left:14.5px;top:1062.0px"><svg class="te" viewBox="0 0 32 32"><g fill="#f89a1c"><circle cx="16" cy="16" r="11"/><circle cx="28.50" cy="16.00" r="3.2"/><circle cx="26.83" cy="22.25" r="3.2"/><circle cx="22.25" cy="26.83" r="3.2"/><circle cx="16.00" cy="28.50" r="3.2"/><circle cx="9.75" cy="26.83" r="3.2"/><circle cx="5.17" cy="22.25" r="3.2"/><circle cx="3.50" cy="16.00" r="3.2"/><circle cx="5.17" cy="9.75" r="3.2"/><circle cx="9.75" cy="5.17" r="3.2"/><circle cx="16.00" cy="3.50" r="3.2"/><circle cx="22.25" cy="5.17" r="3.2"/><circle cx="26.83" cy="9.75" r="3.2"/></g><circle cx="16" cy="16" r="9" fill="#fcc12b"/></svg><span>Light</span></div><div class="th sel" style="left:101.0px;top:1062.0px"><svg class="te" viewBox="0 0 32 32"><path d="M18.160 2.270A13.500 13.500 0 1 1 2.270 18.160 11.500 11.500 0 0 0 18.160 2.270z" fill="#f5a335"/><path d="M19.500 5.500A11.500 11.500 0 0 1 5.500 19.500c4.500 1.500 9 0 11.500-3.500 2.500-3.300 3.300-7 2.500-10.500z" fill="#fcc65e"/></svg><span>Dark</span></div><div class="th" style="left:187.0px;top:1062.0px"><svg class="te" viewBox="0 0 32 32"><path d="M4 6c-1-2 0-4 2-4 0 2 1 3 3 3.500z" fill="#d9c9b0"/><path d="M5 8c0-3 6-3 8-1l14 1c3 0 4 3 4 6v6h-2v8h-4v-7h-8v7h-4v-8c-3 0-5-2-5-5l-4-4c-1-2 0-3 1-3z" fill="#7a4a3a"/><path d="M27 8c3 0 4 3 4 6v6h-2v8h-3z" fill="#5e372b"/></svg><span>Matrix</span></div><div class="th" style="left:14.5px;top:1122.0px"><svg class="te" viewBox="0 0 32 32"><path d="M14 12h4.500l1.300 18h-7z" fill="#a05f6e"/><path d="M14 16h4.700M13.700 20h5.200M13.400 24h5.800" stroke="#84485a" stroke-width="1.200"/><path d="M16 11C13 4 5 3 1.500 8.500c-.8 3 .2 6 1.500 8 .5-3 2-5 4.500-5.500-.5 2 0 4 1 5.500C9.500 13.500 12 12 16 11z" fill="#3fb55d"/><path d="M16 11c3-7 11-8 14.500-2.500.8 3-.2 6-1.500 8-.5-3-2-5-4.500-5.500.500 2 0 4-1 5.500C22.500 13.500 20 12 16 11z" fill="#55cc70"/><path d="M16 11.500c-2.500-4-1-8 2-9.500 1.500 3 .5 6.500-2 9.500z" fill="#2f9a4c"/></svg><span>Miami Vice</span></div><div class="th" style="left:101.0px;top:1122.0px"><svg class="te" viewBox="0 0 32 32"><path d="M22 3l7 7-3.500 3.500-7-7z" fill="#ef5a63"/><path d="M18.500 6.500l7 7-2 2-7-7z" fill="#d9d4e3"/><path d="M16.500 8.500l7 7L10 29l-7-7z" fill="#f97a2a"/><path d="M3 22l7 7-8 1.500z" fill="#f3d3b0"/><path d="M2.300 28l2 2-2.500.500z" fill="#3a3a3a"/></svg><span>Sketchpad</span></div><div class="th" style="left:187.0px;top:1122.0px"><svg class="te" viewBox="0 0 32 32"><rect x="2" y="2" width="28" height="28" rx="3" fill="#7a3f9a"/><rect x="2" y="2" width="28" height="12" rx="3" fill="#9a4aa8"/><rect x="4" y="10" width="7" height="20" fill="#4a2a8a"/><rect x="12" y="15" width="8" height="15" fill="#5a34a0"/><rect x="21" y="8" width="7" height="22" fill="#43277c"/><g fill="#f4c0d8"><rect x="6" y="13" width="2" height="2"/><rect x="6" y="18" width="2" height="2"/><rect x="14" y="18" width="2" height="2"/><rect x="17" y="22" width="2" height="2"/><rect x="23" y="12" width="2" height="2"/><rect x="23" y="18" width="2" height="2"/><rect x="14" y="25" width="2" height="2"/></g><rect x="22" y="23" width="6" height="4" fill="#f6c13a"/></svg><span>Synthwave</span></div>
  <div id="adm"><svg class="ic" viewBox="0 0 24 24" width="16" height="16" ><path d="M12.22 2h-.44a2 2 0 0 0-2 2v.18a2 2 0 0 1-1 1.73l-.43.25a2 2 0 0 1-2 0l-.15-.08a2 2 0 0 0-2.73.73l-.22.38a2 2 0 0 0 .73 2.73l.15.1a2 2 0 0 1 1 1.72v.51a2 2 0 0 1-1 1.74l-.15.09a2 2 0 0 0-.73 2.73l.22.38a2 2 0 0 0 2.73.73l.15-.08a2 2 0 0 1 2 0l.43.25a2 2 0 0 1 1 1.73V20a2 2 0 0 0 2 2h.44a2 2 0 0 0 2-2v-.18a2 2 0 0 1 1-1.73l.43-.25a2 2 0 0 1 2 0l.15.08a2 2 0 0 0 2.73-.73l.22-.39a2 2 0 0 0-.73-2.73l-.15-.08a2 2 0 0 1-1-1.74v-.5a2 2 0 0 1 1-1.74l.15-.09a2 2 0 0 0 .73-2.73l-.22-.38a2 2 0 0 0-2.73-.73l-.15.08a2 2 0 0 1-2 0l-.43-.25a2 2 0 0 1-1-1.73V4a2 2 0 0 0-2-2z"/><circle cx="12" cy="12" r="3"/></svg></div><div id="admt">Admin Settings</div>
</div>

<div id="main">
  <div id="saved"><div class="f"><svg class="ic" viewBox="0 0 24 24" width="16" height="16" ><path d="m6 14 1.5-2.9A2 2 0 0 1 9.24 10H20a2 2 0 0 1 1.94 2.5l-1.54 6a2 2 0 0 1-1.95 1.5H4a2 2 0 0 1-2-2V5a2 2 0 0 1 2-2h3.9a2 2 0 0 1 1.69.9l.81 1.2a2 2 0 0 0 1.67.9H18a2 2 0 0 1 2 2v2"/></svg></div><div class="t">Saved Calculations</div><div class="b">1/5</div><div class="c"><svg class="ic" viewBox="0 0 24 24" width="14" height="14" ><path d="m6 9 6 6 6-6"/></svg></div></div>
  <div id="ttl"><svg viewBox="0 0 32 32"><rect x="0" y="0" width="32" height="32" rx="4" fill="#449cf5"/><rect x="0" y="25" width="32" height="7" rx="4" fill="#1f7fe0" opacity=".55"/><path d="M8.500 15.500a7.500 7.500 0 0 1 13-5" fill="none" stroke="#fff" stroke-width="3.400"/><path d="M18.500 13l7.500 1-1-7.500z" fill="#fff"/><path d="M23.500 16.500a7.500 7.500 0 0 1-13 5" fill="none" stroke="#fff" stroke-width="3.400"/><path d="M13.500 19L6 18l1 7.500z" fill="#fff"/></svg><span>BRRRR Calculator</span></div>
  <div id="sub">Buy, Rehab, Rent, Refinance, Repeat - Analyze your deal</div>
  <div id="tabs"><div class="a">1. Purchase &amp; Rehab</div><div>2. Rental Income</div><div>3. Refinance</div></div>

  <!-- card 1 -->
  <div class="card" style="top:252px;height:459px">
    <h2 style="top:26px;font-size:20px;line-height:24px">Purchase &amp; Rehab Details</h2>
    <div class="lbl" style="left:23.4px;top:77px">Purchase Price <i>*</i></div>
    <div class="lbl" style="left:353.4px;top:77px">Rehab Costs <i>*</i></div>
    <div class="lbl" style="left:683.4px;top:77px">After Repair Value (ARV) <i>*</i></div>
    <div class="inp" style="left:24px;top:100px">120000</div>
    <div class="inp" style="left:354px;top:100px">75000</div>
    <div class="inp" style="left:684px;top:100px">350000</div>
    <div class="lbl" style="left:23.4px;top:159px">Closing Costs (% of purchase)</div>
    <div class="lbl" style="left:353.4px;top:159px">Holding Costs During Rehab</div>
    <div class="lbl" style="left:683.4px;top:159px">Rehab Time (months)</div>
    <div class="inp" style="left:24px;top:182px">3</div>
    <div class="inp ph" style="left:354px;top:182px">5000</div>
    <div class="inp" style="left:684px;top:182px">5</div>
    <div class="lbl" style="left:353.4px;top:233px;font-size:12px;line-height:16px">Insurance, taxes, utilities during rehab</div>
    <div style="position:absolute;left:24px;top:276px;width:974px;height:85px;border-radius:6px;background:#525252">
      <div style="position:absolute;left:16px;top:26px;font-size:14px;line-height:18px;color:#f2f2f2;white-space:nowrap">Use Hard Money/Initial Loan?</div>
      <div style="position:absolute;left:216px;top:16px;width:168px;height:37px;border-radius:6px;background:#1a1a1a;border:1px solid #404040;color:#fff;font-size:16px;line-height:35px;padding-left:16px;white-space:nowrap">No - All Cash
        <svg viewBox="0 0 12 8" width="10" height="7" style="position:absolute;left:152px;top:14px"><path d="M1.500 1.500L6 6l4.500-4.500" fill="none" stroke="#fff" stroke-width="2"/></svg>
      </div>
    </div>
    <div style="position:absolute;left:24px;top:385px;width:974px;height:48px;border-radius:6px;background:#3b82f6;color:#fff;font-size:16px;line-height:48px;text-align:center">Analyze BRRRR Deal</div>
  </div>

  <!-- card 2 -->
  <div class="card" style="top:735px;height:226px">
    <h2 style="top:32px;font-size:20px;line-height:24px">BRRRR Score</h2>
    <div style="position:absolute;right:24px;top:22px;font-size:36px;line-height:44px;font-weight:700;color:#dc8d0a">60/100</div>
    <div style="position:absolute;left:24px;top:80px;width:974px;height:16px;border-radius:8px;background:#525252;overflow:hidden"><div style="width:60%;height:16px;background:#efb305"></div></div>
    <div style="position:absolute;left:24px;top:110px;width:974px;text-align:center;font-size:18px;line-height:24px;font-weight:700;color:#dc8d0a">Good Deal</div>
    <div class="sc" style="left:24px"><b>25</b><span>Cash Back</span></div>
    <div class="sc" style="left:220px"><b>0</b><span>Cash Flow</span></div>
    <div class="sc" style="left:416px"><b>20</b><span>CoC Return</span></div>
    <div class="sc" style="left:613px"><b>15</b><span>ARV Margin</span></div>
    <div class="sc" style="left:809px"><b>0</b><span>DSCR</span></div>
  </div>

  <!-- card 3 -->
  <div class="card" style="top:985px;height:208px">
    <h2 style="top:27px;font-size:18px;line-height:22px">Investment Summary</h2>
    <div class="sm" style="left:24px;top:68px"><span>All-In Cost</span><b>$198,600</b></div>
    <div class="sm" style="left:519px;top:68px"><span>Total Cash Invested</span><b>$198,600</b></div>
    <div class="sm g" style="left:24px;top:132px"><span>ARV Margin</span><b>$151,400 (43.3%)</b></div>
    <div class="sm" style="left:519px;top:132px;height:50px;line-height:48px"><span>Equity After Refi</span><b>$87,500</b></div>
  </div>

  <!-- card 4 (peek) -->
  <div class="card" style="top:1217px;height:200px"></div>
</div>
<style>
.sc{position:absolute;top:152px;width:188px;height:48px;border-radius:4px;background:#525252;text-align:center;font-size:12px}
.sc b{display:block;margin-top:9px;line-height:14px;color:#f5f5f5}
.sc span{display:block;line-height:16px;color:#b8b8b8;margin-top:1px}
.sm{position:absolute;width:479px;height:48px;border-radius:6px;background:#111;font-size:16px;line-height:47px;padding:0 13px 0 11px;color:#b0b0b0;white-space:nowrap}
.sm b{float:right;color:#fff}
.sm.g{height:50px;background:#effdf4;border:1px solid #1f4a30;color:#eaf9ef;line-height:47px;padding:0 12px 0 10px}
.sm.g b{color:#16a34a}
</style>
</body>
</html>
